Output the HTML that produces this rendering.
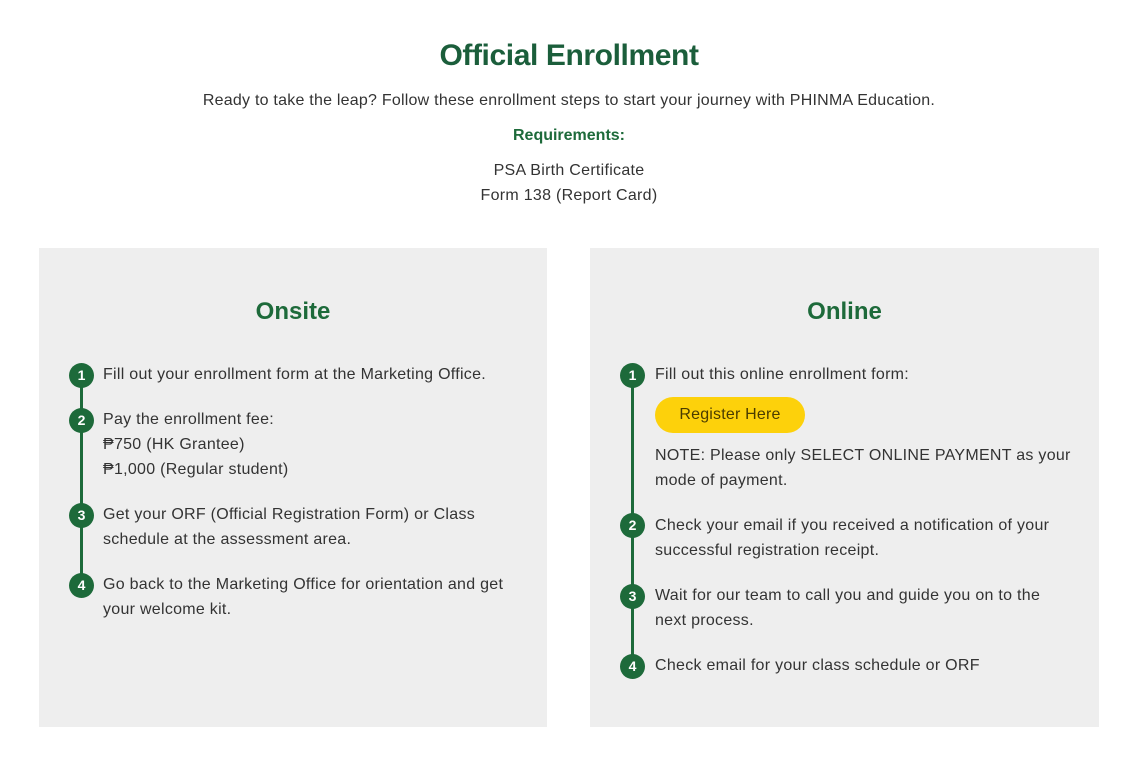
<!DOCTYPE html>
<html><head><meta charset="utf-8"><style>
*{margin:0;padding:0;box-sizing:border-box}
body{width:1138px;height:758px;background:#fff;font-family:"Liberation Sans",sans-serif;color:#333;position:relative;overflow:hidden}
.a{position:absolute;white-space:nowrap;font-size:16px;letter-spacing:0.28px;line-height:25px}
.c{left:0;width:1138px;text-align:center}
.g{color:#1d6a3a;font-weight:bold}
.panel{position:absolute;top:248px;height:479px;background:#eeeeee}
.line{position:absolute;width:3px;background:#1d6a3a}
.dot{position:absolute;width:25px;height:25px;border-radius:50%;background:#1d6a3a;color:#fff;font-size:14px;font-weight:bold;text-align:center;line-height:25px}
.btn{position:absolute;left:655px;top:397px;width:150px;height:36px;border-radius:18px;background:#fdd10b;color:#4a3c00;font-size:16px;text-align:center;line-height:36px;letter-spacing:0.2px}
</style></head><body>
<div class="a c g" style="top:38px;font-size:30px;line-height:36px;letter-spacing:-0.4px;color:#1b5e3b">Official Enrollment</div>
<div class="a c" style="top:88px;letter-spacing:0.23px">Ready to take the leap? Follow these enrollment steps to start your journey with PHINMA Education.</div>
<div class="a c g" style="top:123px;letter-spacing:0">Requirements:</div>
<div class="a c" style="top:158px">PSA Birth Certificate</div>
<div class="a c" style="top:183px">Form 138 (Report Card)</div>

<div class="panel" style="left:39px;width:508px"></div>
<div class="panel" style="left:590px;width:509px"></div>

<div class="a g" style="left:39px;width:508px;text-align:center;top:297px;font-size:24px;line-height:30px;letter-spacing:0">Onsite</div>
<div class="a g" style="left:590px;width:509px;text-align:center;top:297px;font-size:24px;line-height:30px;letter-spacing:0">Online</div>

<div class="line" style="left:80px;top:376px;height:210px"></div>
<div class="dot" style="left:69px;top:363px">1</div>
<div class="dot" style="left:69px;top:408px">2</div>
<div class="dot" style="left:69px;top:503px">3</div>
<div class="dot" style="left:69px;top:573px">4</div>
<div class="a" style="left:103px;top:362px">Fill out your enrollment form at the Marketing Office.</div>
<div class="a" style="left:103px;top:407px">Pay the enrollment fee:<br>₱750 (HK Grantee)<br>₱1,000 (Regular student)</div>
<div class="a" style="left:103px;top:502px">Get your ORF (Official Registration Form) or Class<br>schedule at the assessment area.</div>
<div class="a" style="left:103px;top:572px">Go back to the Marketing Office for orientation and get<br>your welcome kit.</div>

<div class="line" style="left:631px;top:376px;height:290px"></div>
<div class="dot" style="left:620px;top:363px">1</div>
<div class="dot" style="left:620px;top:513px">2</div>
<div class="dot" style="left:620px;top:584px">3</div>
<div class="dot" style="left:620px;top:654px">4</div>
<div class="a" style="left:655px;top:362px">Fill out this online enrollment form:</div>
<div class="btn">Register Here</div>
<div class="a" style="left:655px;top:443px">NOTE: Please only SELECT ONLINE PAYMENT as your<br>mode of payment.</div>
<div class="a" style="left:655px;top:513px">Check your email if you received a notification of your<br>successful registration receipt.</div>
<div class="a" style="left:655px;top:583px">Wait for our team to call you and guide you on to the<br>next process.</div>
<div class="a" style="left:655px;top:653px">Check email for your class schedule or ORF</div>
</body></html>
